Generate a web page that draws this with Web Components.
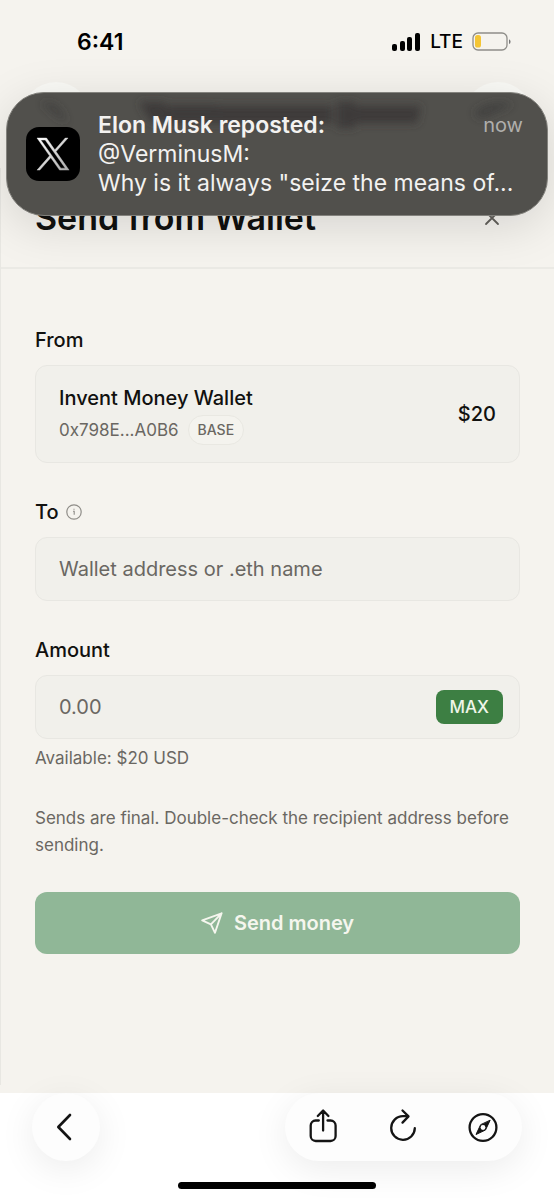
<!DOCTYPE html>
<html lang="en">
<head>
<meta charset="utf-8">
<meta name="viewport" content="width=device-width, initial-scale=1">
<title>Send from Wallet</title>
<style>
  html, body { margin: 0; }
  body {
    --ink: #11110f; --muted: #6a6762; --line: #e8e7e2;
    --field: #f1f0eb; --page: #f5f3ee; --green: #3d7f43;
    font-family: Inter, "Liberation Sans", sans-serif;
    color: var(--ink); background: #fff;
  }
</style>
</head>
<body>
<wallet-screen></wallet-screen>
<script>
const define = (name, html, setup) => customElements.define(name, class extends HTMLElement {
  constructor() {
    super();
    const t = document.createElement('template');
    t.innerHTML = html;
    this.attachShadow({ mode: 'open' }).append(t.content.cloneNode(true));
  }
  connectedCallback() { if (setup) setup(this, this.shadowRoot); }
});

define('status-bar', `
<style>
  :host { display: flex; justify-content: space-between; align-items: center; height: 82px; box-sizing: border-box;
    padding: 2px 43px 0 77px; color: #000; font-size: 23px; font-weight: 600; line-height: 28px; }
  .right { display: flex; align-items: center; gap: 9px; font-size: 19px; font-weight: 500; }
  svg { display: block; }
</style>
<span>6:41</span>
<div class="right">
  <svg width="29" height="18" viewBox="0 0 29 18" aria-label="Signal"><rect x="0" y="11" width="5" height="7" rx="2"/><rect x="8" y="8" width="5" height="10" rx="2"/><rect x="15" y="4" width="5" height="14" rx="2"/><rect x="23" y="0" width="5" height="18" rx="2"/></svg>
  <span>LTE</span>
  <svg width="39" height="20" viewBox="0 0 39 20" aria-label="Battery low"><rect x="1" y="1" width="34" height="17" rx="5" fill="none" stroke="#8e8d89" stroke-width="1.3"/><rect x="3" y="3" width="6" height="12.5" rx="2.6" fill="#f4c534"/><path d="M37 7.2q1.6.7 1.6 2.5T37 12z" fill="#777"/></svg>
</div>`);

define('site-bar', `
<style>
  :host { display: flex; justify-content: space-between; height: 86px; padding: 0 21px; }
  button { width: 70px; height: 70px; border: 0; border-radius: 50%; background: #fafaf6; }
</style>
<button aria-label="Menu"></button><button aria-label="Account"></button>`);

define('push-banner', `
<style>
  :host { position: absolute; z-index: 2; top: 92px; left: 6px; right: 6px; height: 124px; box-sizing: border-box;
    display: flex; align-items: center; gap: 18px; padding: 0 24px 0 19px; border: 1px solid #83827d; border-radius: 38px;
    background: #51504c; color: #f3f2f0; font-size: 23px; line-height: 29px; overflow: hidden; }
  .haze { position: absolute; inset: 0; width: 100%; height: 100%; }
  .icon { position: relative; flex: none; display: block; }
  .copy { position: relative; flex: 1; min-width: 0; }
  .top { display: flex; justify-content: space-between; }
  strong { font-weight: 600; }
  time { color: #b0afac; font-size: 20px; }
  p { margin: 0; white-space: nowrap; overflow: hidden; text-overflow: ellipsis; }
</style>
<svg class="haze" aria-hidden="true"><defs><filter id="b" x="-20%" y="-60%" width="140%" height="220%"><feGaussianBlur stdDeviation="4"/></filter></defs>
  <g filter="url(#b)" fill="#383735"><path d="M132 9h26l4 20h-18zM160 12h50v18h-48zM208 13h62v17h-62zM270 13h56v17h-56zM330 9h18v26h-18zM348 13h66l-4 17h-62z" opacity=".85"/><path d="M34 10q18-4 26 20l-12-8zM466 20q20-16 40-8l-32 14z" opacity=".6"/></g></svg>
<svg class="icon" width="54" height="54" viewBox="0 0 54 54" role="img" aria-label="X">
  <defs><linearGradient id="g" x2="1" y2="1"><stop stop-color="#fff"/><stop offset="1" stop-color="#aaa"/></linearGradient></defs>
  <rect width="54" height="54" rx="13" fill="#000"/>
  <g transform="translate(11 11) scale(1.34)"><path fill="url(#g)" stroke="url(#g)" stroke-width=".3" d="M14.258 10.152 23.176 0h-2.113l-7.747 8.813L7.133 0H0l9.352 13.328L0 23.973h2.113l8.176-9.309 6.531 9.309h7.133zm-2.895 3.293-.949-1.328L2.875 1.56h3.246l6.086 8.523.945 1.328 7.91 11.078h-3.246z"/></g>
</svg>
<div class="copy">
  <div class="top"><strong>Elon Musk reposted:</strong><time>now</time></div>
  <p>@VerminusM:</p>
  <p>Why is it always "seize the means of...</p>
</div>`);

define('sheet-header', `
<style>
  :host { display: flex; justify-content: space-between; align-items: center; height: 101px; box-sizing: border-box;
    padding: 1px 54px 0 34px; border-bottom: 2px solid #ebeae5; }
  h1 { margin: 0; font-size: 34px; line-height: 40px; font-weight: 600; }
  button { border: 0; padding: 0; background: none; width: 16px; height: 16px; color: #62605b; }
  svg { display: block; }
</style>
<h1><slot></slot></h1>
<button aria-label="Close"><svg width="16" height="16" viewBox="0 0 16 16" stroke="currentColor" stroke-width="1.8" stroke-linecap="round"><path d="M2 2l12 12M14 2L2 14"/></svg></button>`);

define('wallet-card', `
<style>
  :host { display: block; }
  h2 { margin: 0 0 11px; font-size: 20px; line-height: 28px; font-weight: 500; }
  .card { display: flex; justify-content: space-between; align-items: center; height: 98px; box-sizing: border-box;
    padding: 0 23px; background: var(--field); border: 1px solid var(--line); border-radius: 12px; font-size: 20px; font-weight: 500; }
  .info { display: flex; flex-direction: column; gap: 3px; }
  .name { line-height: 28px; }
  .row { display: flex; align-items: center; gap: 9px; color: var(--muted); font-size: 17px; line-height: 28px; font-weight: 400; }
  .tag { border: 1px solid #e9e8e2; border-radius: 16px; background: #f4f3ee; padding: 0 9px; font-size: 14px; font-weight: 500; }
</style>
<h2>From</h2>
<div class="card">
  <div class="info"><div class="name">Invent Money Wallet</div>
  <div class="row"><span>0x798E...A0B6</span><span class="tag">BASE</span></div></div>
  <span>$20</span>
</div>`);

define('text-field', `
<style>
  :host { display: block; }
  .head { display: flex; align-items: center; gap: 7px; margin-bottom: 11px; font-size: 20px; line-height: 28px; font-weight: 500; }
  .box { display: flex; align-items: center; height: 64px; box-sizing: border-box; padding: 0 16px 0 23px;
    background: var(--field); border: 1px solid var(--line); border-radius: 12px; }
  input { flex: 1; min-width: 0; border: 0; padding: 0; outline: 0; background: none; font: inherit; font-size: 20px; line-height: 28px; color: var(--ink); }
  input::placeholder { color: var(--muted); opacity: 1; }
</style>
<div class="head"><label for="f"></label><slot name="info"></slot></div>
<div class="box"><input id="f" type="text"><slot name="action"></slot></div>`,
(el, root) => {
  root.querySelector('label').textContent = el.getAttribute('label');
  root.querySelector('input').placeholder = el.getAttribute('placeholder');
});

define('info-dot', `
<style>:host, svg { display: block; }</style>
<svg width="16" height="16" viewBox="0 0 16 16" fill="none" stroke="#8f8d88" aria-label="Info"><circle cx="8" cy="8" r="7.2" stroke-width="1.2"/><path d="M7 7.3h1.2v3.4M8 4.8v.9" stroke-width="1.1"/></svg>`);

define('max-button', `
<style>
  :host { display: block; }
  button { display: block; border: 0; border-radius: 8px; padding: 0 14px; background: var(--green); color: #eff5e9; font: inherit; font-size: 17px; line-height: 34px; font-weight: 500; }
</style>
<button type="button"><slot></slot></button>`);

define('send-button', `
<style>
  :host { display: block; }
  button { display: flex; justify-content: center; align-items: center; gap: 11px; width: 100%; height: 62px; border: 0; border-radius: 12px;
    background: #90b797; color: #f5f6ee; font: inherit; font-size: 20px; line-height: 28px; font-weight: 600; }
</style>
<button type="button"><svg width="22" height="22" viewBox="0 0 22 22" fill="none" stroke="currentColor" stroke-width="1.9" stroke-linejoin="round" stroke-linecap="round"><path d="M1.2 8.3 20.6 1.3 14 20.8 9.9 12.3ZM9.9 12.3 20.6 1.3"/></svg><slot></slot></button>`);

define('browser-bar', `
<style>
  :host { display: flex; flex-direction: column; justify-content: space-between; align-items: center; height: 107px; box-sizing: border-box; padding-bottom: 11px; background: #fff; }
  .row { display: flex; justify-content: space-between; align-self: stretch; padding: 0 32px; }
  .pill { display: flex; align-items: center; height: 68px; box-sizing: border-box; border-radius: 34px; background: #fdfdfd; box-shadow: 0 8px 36px rgba(0,0,0,.08); }
  .tools { padding: 0 25px 2px 24px; gap: 52px; }
  button { display: block; border: 0; padding: 0; background: none; color: #141414; width: 28px; height: 40px; }
  .back { padding: 0 20px; }
  svg { display: block; margin: auto; overflow: visible; fill: none; stroke: currentColor; stroke-width: 2.3; stroke-linecap: round; stroke-linejoin: round; }
  .home { width: 198px; height: 7px; border-radius: 4px; background: #000; }
</style>
<div class="row">
  <div class="pill back"><button aria-label="Back"><svg width="28" height="32" viewBox="0 0 28 32"><path d="M18 4 6.3 16 18 28" stroke-width="2.6"/></svg></button></div>
  <div class="pill tools">
    <button aria-label="Share"><svg width="28" height="36" viewBox="0 0 28 36"><path d="M9.8 12.5H6.6A5 5 0 0 0 1.7 17.5V28A5 5 0 0 0 6.7 33H21.6A5 5 0 0 0 26.6 28V17.5A5 5 0 0 0 21.6 12.5H18.5M14.1 22.5V3M8.8 8 14.1 2.5 19.4 8"/></svg></button>
    <button aria-label="Reload"><svg width="28" height="36" viewBox="0 0 28 36"><path d="M25.8 20.2A11.8 11.8 0 1 1 14 8.2H19M13.5 2.5 19.5 8.4 13.5 14.6"/></svg></button>
    <button aria-label="Open in browser"><svg width="28" height="36" viewBox="1 0 28 36"><circle cx="15" cy="19.5" r="13.4"/><path d="M22 12.5 17.5 22 8 26.5 12.5 17Z" fill="currentColor" stroke-width="1"/><circle cx="15" cy="19.5" r="2.4" fill="#fdfdfd" stroke="none"/></svg></button>
  </div>
</div>
<div class="home"></div>`);

define('wallet-screen', `
<style>
  :host { position: relative; display: flex; flex-direction: column; min-height: 100vh; background: var(--page); }
  .glow { position: absolute; top: 92px; left: 6px; right: 6px; height: 124px; border-radius: 38px; box-shadow: 0 10px 48px rgba(0,0,0,.13); }
  .clip { position: absolute; inset: 0; overflow: hidden; pointer-events: none; }
  .sheet { flex: 1; border-left: 1px solid #e8e7e2; margin-bottom: 8px; }
  form { padding: 57px 34px 40px; display: flex; flex-direction: column; gap: 35px; }
  .hint, .note { margin: 0; color: var(--muted); font-size: 17px; line-height: 27px; }
  .hint { margin-top: 6px; }
  .note { margin: -2px 0; }
</style>
<div class="clip"><div class="glow"></div></div>
<status-bar></status-bar>
<site-bar></site-bar>
<push-banner></push-banner>
<main class="sheet">
  <sheet-header>Send from Wallet</sheet-header>
  <form>
    <wallet-card></wallet-card>
    <text-field label="To" placeholder="Wallet address or .eth name"><info-dot slot="info"></info-dot></text-field>
    <div><text-field label="Amount" placeholder="0.00"><max-button slot="action">MAX</max-button></text-field>
    <p class="hint">Available: $20 USD</p></div>
    <p class="note">Sends are final. Double-check the recipient address before sending.</p>
    <send-button>Send money</send-button>
  </form>
</main>
<browser-bar></browser-bar>`);
</script>
</body>
</html>
